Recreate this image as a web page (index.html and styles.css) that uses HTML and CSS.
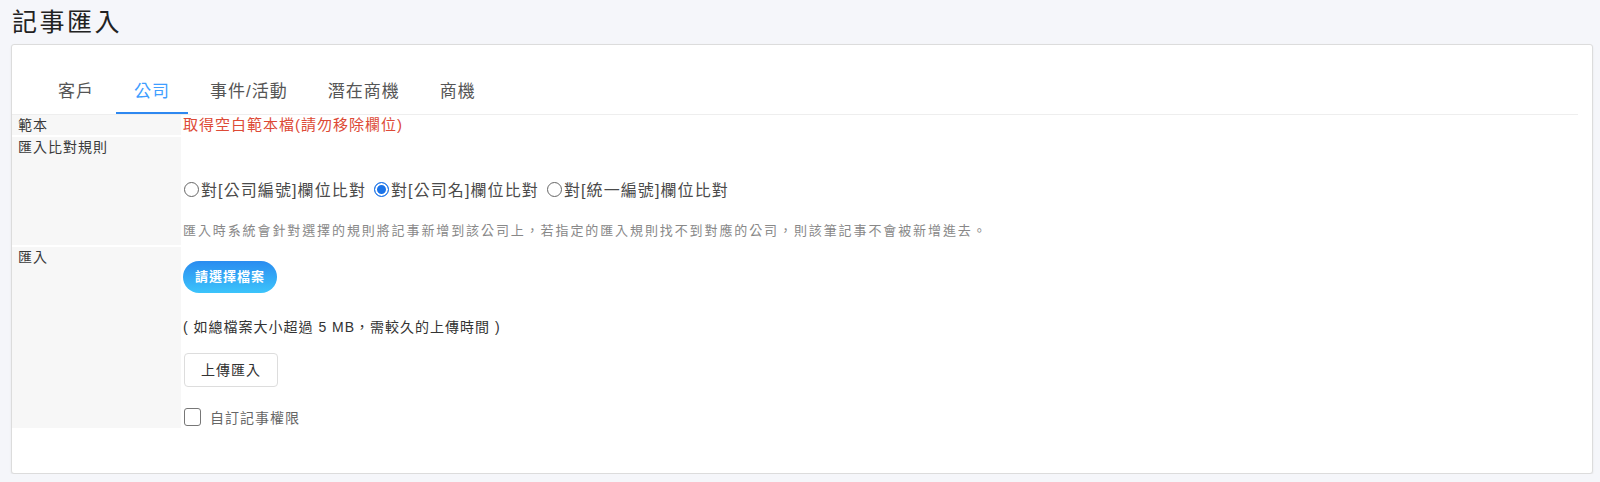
FILE: index.html
```html
<!DOCTYPE html>
<html lang="zh-Hant">
<head>
<meta charset="utf-8">
<title>記事匯入</title>
<link rel="stylesheet" href="styles.css">
</head>
<body>
<h1 class="page-title">記事匯入</h1>
<div class="card">
  <div class="tabs">
    <div class="tab">客戶</div>
    <div class="tab active">公司</div>
    <div class="tab">事件/活動</div>
    <div class="tab">潛在商機</div>
    <div class="tab">商機</div>
  </div>
  <div class="form">
    <div class="row row-template">
      <div class="label">範本</div>
      <div class="field"><a class="link-red">取得空白範本檔(請勿移除欄位)</a></div>
    </div>
    <div class="row row-rule">
      <div class="label">匯入比對規則</div>
      <div class="field field-rule">
        <div class="radios">
          <label class="radio"><span class="dot"></span>對[公司編號]欄位比對</label>
          <label class="radio"><span class="dot checked"></span>對[公司名]欄位比對</label>
          <label class="radio"><span class="dot"></span>對[統一編號]欄位比對</label>
        </div>
        <div class="hint">匯入時系統會針對選擇的規則將記事新增到該公司上，若指定的匯入規則找不到對應的公司，則該筆記事不會被新增進去。</div>
      </div>
    </div>
    <div class="row row-import">
      <div class="label">匯入</div>
      <div class="field field-import">
        <div class="btn-pick">請選擇檔案</div>
        <div class="note">( 如總檔案大小超過 5 MB，需較久的上傳時間 )</div>
        <div class="btn-upload">上傳匯入</div>
        <label class="check"><span class="box"></span>自訂記事權限</label>
      </div>
    </div>
  </div>
</div>
</body>
</html>
```

FILE: styles.css
```css
* { box-sizing: border-box; }
html, body {
  margin: 0;
  padding: 0;
  background: #f5f6fa;
  font-family: "Liberation Sans", "Noto Sans CJK TC", sans-serif;
  color: #333;
}
.page-title {
  margin: 0;
  padding-left: 12px;
  height: 44px;
  line-height: 44px;
  font-size: 25px;
  font-weight: normal;
  letter-spacing: 2.5px;
  color: #222;
}
.card {
  margin: 0 7px 0 11px;
  height: 430px;
  background: #fff;
  border: 1px solid #dcdcdc;
  border-radius: 3px;
  box-shadow: 0 1px 2px rgba(0,0,0,0.08);
  padding-top: 27px;
}
.tabs {
  display: flex;
  padding-left: 28px;
  margin-right: 14px;
  border-bottom: 1px solid #eeeeee;
}
.tab {
  height: 42px;
  line-height: 40px;
  padding: 0 18px;
  margin-right: 4px;
  font-size: 17px;
  letter-spacing: 1px;
  color: #555;
  border-bottom: 2px solid transparent;
}
.tab.active {
  color: #409eff;
  border-bottom-color: #2e88f0;
}
.row {
  display: flex;
  margin-bottom: 2px;
}
.row:last-child { margin-bottom: 0; }
.label {
  width: 169px;
  flex: none;
  background: #f7f7f7;
  padding-left: 6px;
  font-size: 14px;
  line-height: 20px;
  letter-spacing: 1px;
  color: #3a3a3a;
}
.field {
  margin-left: 2px;
  flex: 1;
}
.row-template { height: 20px; }
.link-red {
  font-size: 15px;
  line-height: 20px;
  letter-spacing: 1px;
  color: #dd4a36;
  cursor: pointer;
}
.field-rule {
  padding-top: 40px;
  padding-bottom: 4px;
}
.radios {
  display: flex;
  align-items: center;
  height: 24px;
  font-size: 16px;
  letter-spacing: 1.1px;
  color: #4a4a4a;
}
.radio {
  display: inline-flex;
  align-items: center;
  margin-right: 7px;
}
.dot {
  width: 15px;
  height: 15px;
  border-radius: 50%;
  border: 1px solid #666;
  margin-left: 1px;
  margin-right: 2px;
  flex: none;
}
.dot.checked {
  border-color: #1a73e8;
  background: #1a73e8;
  box-shadow: inset 0 0 0 2px #fff;
}
.hint {
  margin-top: 20px;
  font-size: 13px;
  line-height: 20px;
  letter-spacing: 1.9px;
  color: #888;
}
.field-import {
  padding-top: 14px;
  padding-bottom: 1px;
}
.btn-pick {
  width: 94px;
  height: 32px;
  border-radius: 16px;
  background: linear-gradient(180deg, #2a8cf0 0%, #3cc4fb 100%);
  color: #fff;
  font-size: 13px;
  font-weight: bold;
  letter-spacing: 1px;
  line-height: 32px;
  text-align: center;
}
.note {
  margin-top: 24px;
  font-size: 14px;
  line-height: 20px;
  letter-spacing: 1px;
  color: #333;
}
.btn-upload {
  margin-top: 16px;
  margin-left: 1px;
  width: 94px;
  height: 34px;
  border: 1px solid #dddddd;
  border-radius: 4px;
  background: #fff;
  font-size: 14px;
  letter-spacing: 1px;
  line-height: 32px;
  text-align: center;
  color: #333;
}
.check {
  margin-top: 20px;
  margin-left: 1px;
  display: flex;
  align-items: center;
  height: 20px;
  font-size: 14px;
  letter-spacing: 1px;
  color: #666;
}
.box {
  width: 17px;
  height: 18px;
  border: 1.5px solid #777;
  border-radius: 3px;
  margin-right: 9px;
  flex: none;
}
```
